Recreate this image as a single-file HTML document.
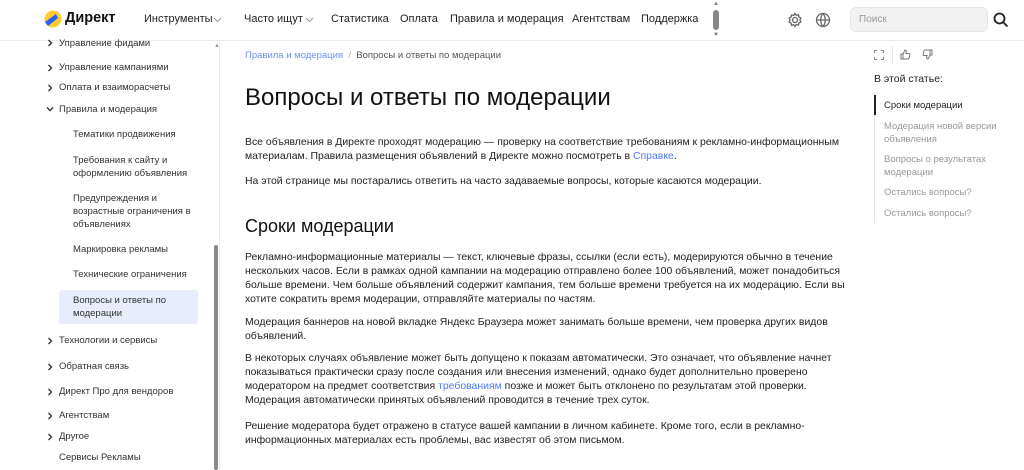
<!DOCTYPE html>
<html><head><meta charset="utf-8"><style>
*{margin:0;padding:0;box-sizing:border-box}
body{width:1024px;height:470px;overflow:hidden;background:#fff;font-family:"Liberation Sans",sans-serif;color:#222;position:relative}
.a{position:absolute;white-space:nowrap}
.hdr{position:absolute;left:0;top:0;width:1024px;height:41px;border-bottom:1px solid #ebebeb;background:#fff}
.nav{font-size:11px;color:#222;top:13px}
.sb{font-size:9.5px;color:#333;line-height:13px}
.t{font-size:10.45px;line-height:14px;color:#222;left:245px}
.lnk{color:#4a7cf6}
.toc{font-size:9.5px;color:#999;line-height:13px;left:884px}
</style></head><body>
<div class="hdr"></div>
<svg class="a" style="left:44px;top:10px" width="18" height="18" viewBox="0 0 18 18"><circle cx="9" cy="9" r="8.5" fill="#fc3"/><path d="M1 12 L12 4 L14 8 L4 16Z" fill="#2a5ff0"/></svg>
<div class="a" style="left:65px;top:10px;font-size:14.5px;font-weight:bold;color:#111">Директ</div>
<div class="a nav" style="left:144px">Инструменты</div>
<svg class="a" style="left:213px;top:17px" width="9" height="6" viewBox="0 0 9 6" fill="none" stroke="#999" stroke-width="1"><path d="M1 1l3.5 3.5L8 1"/></svg>
<div class="a nav" style="left:244px">Часто ищут</div>
<svg class="a" style="left:305px;top:17px" width="9" height="6" viewBox="0 0 9 6" fill="none" stroke="#999" stroke-width="1"><path d="M1 1l3.5 3.5L8 1"/></svg>
<div class="a nav" style="left:331px">Статистика</div>
<div class="a nav" style="left:400px">Оплата</div>
<div class="a nav" style="left:450px">Правила и модерация</div>
<div class="a nav" style="left:572px">Агентствам</div>
<div class="a nav" style="left:641px">Поддержка</div>
<div class="a" style="left:713px;top:10px;width:6px;height:20px;background:#888;border-radius:3px"></div>
<div class="a" style="left:713px;top:1px;font-size:6px;color:#777">▲</div>
<div class="a" style="left:713px;top:32px;font-size:6px;color:#777">▼</div>
<svg class="a" style="left:787px;top:12px" width="16" height="16" viewBox="0 0 16 16" fill="none" stroke="#666" stroke-width="1.3"><circle cx="8" cy="8" r="2.5"/><path d="M8 1.5l1.3 1.8 2.2-.6.4 2.2 2 1-1 2 1 2-2 1-.4 2.2-2.2-.6L8 14.5l-1.3-1.8-2.2.6-.4-2.2-2-1 1-2-1-2 2-1 .4-2.2 2.2.6z"/></svg>
<svg class="a" style="left:815px;top:12px" width="16" height="16" viewBox="0 0 16 16" fill="none" stroke="#666" stroke-width="1.3"><circle cx="8" cy="8" r="6.5"/><path d="M1.5 8h13M8 1.5c-3 3.5-3 9.5 0 13M8 1.5c3 3.5 3 9.5 0 13"/></svg>
<div class="a" style="left:850px;top:7px;width:138px;height:25px;background:#f2f2f2;border:1px solid #e6e6e6;border-radius:6px;font-size:10px;color:#999;padding:6px 8px">Поиск</div>
<svg class="a" style="left:993px;top:12px" width="16" height="16" viewBox="0 0 16 16" fill="none" stroke="#222" stroke-width="1.8"><circle cx="6.5" cy="6.5" r="5"/><path d="M10.2 10.2L14.5 14.5"/></svg>

<div class="a" style="left:219px;top:42px;width:1px;height:428px;background:#ebebeb"></div>
<div class="a" style="left:214px;top:245px;width:4px;height:225px;background:#8a8a8a;border-radius:2px"></div>
<div class="a" style="left:214px;top:43px;font-size:6px;color:#999">▲</div>

<svg width="0" height="0" style="position:absolute"><defs><path id="cr" d="M1.5 1l3 3-3 3" fill="none" stroke="#333" stroke-width="1.4"/><path id="cd" d="M1 2.5l3 3 3-3" fill="none" stroke="#333" stroke-width="1.4"/></defs></svg>
<svg class="a" style="left:47px;top:39px" width="8" height="8"><use href="#cr"/></svg><div class="a sb" style="left:59px;top:37px">Управление фидами</div>
<svg class="a" style="left:47px;top:64px" width="8" height="8"><use href="#cr"/></svg><div class="a sb" style="left:59px;top:61px">Управление кампаниями</div>
<svg class="a" style="left:47px;top:84px" width="8" height="8"><use href="#cr"/></svg><div class="a sb" style="left:59px;top:81px">Оплата и взаиморасчеты</div>
<svg class="a" style="left:46px;top:105px" width="8" height="8"><use href="#cd"/></svg><div class="a sb" style="left:59px;top:103px">Правила и модерация</div>
<div class="a sb" style="left:73px;top:128px">Тематики продвижения</div>
<div class="a sb" style="left:73px;top:154px">Требования к сайту и<br>оформлению объявления</div>
<div class="a sb" style="left:73px;top:192px">Предупреждения и<br>возрастные ограничения в<br>объявлениях</div>
<div class="a sb" style="left:73px;top:243px">Маркировка рекламы</div>
<div class="a sb" style="left:73px;top:268px">Технические ограничения</div>
<div class="a" style="left:59px;top:290px;width:139px;height:34px;background:#e8edfd;border-radius:3px"></div>
<div class="a sb" style="left:73px;top:294px">Вопросы и ответы по<br>модерации</div>
<svg class="a" style="left:47px;top:337px" width="8" height="8"><use href="#cr"/></svg><div class="a sb" style="left:59px;top:334px">Технологии и сервисы</div>
<svg class="a" style="left:47px;top:363px" width="8" height="8"><use href="#cr"/></svg><div class="a sb" style="left:59px;top:360px">Обратная связь</div>
<svg class="a" style="left:47px;top:388px" width="8" height="8"><use href="#cr"/></svg><div class="a sb" style="left:59px;top:385px">Директ Про для вендоров</div>
<svg class="a" style="left:47px;top:412px" width="8" height="8"><use href="#cr"/></svg><div class="a sb" style="left:59px;top:409px">Агентствам</div>
<svg class="a" style="left:47px;top:433px" width="8" height="8"><use href="#cr"/></svg><div class="a sb" style="left:59px;top:430px">Другое</div>
<div class="a sb" style="left:59px;top:451px">Сервисы Рекламы</div>

<div class="a" style="left:245px;top:50px;font-size:9.5px;color:#555"><span style="color:#6f8ff0">Правила и модерация</span> <span style="color:#aaa">&nbsp;/&nbsp;</span> Вопросы и ответы по модерации</div>
<div class="a" style="left:245px;top:84px;font-size:24px;color:#111">Вопросы и ответы по модерации</div>

<div class="a t" style="top:136px">Все объявления в Директе проходят модерацию — проверку на соответствие требованиям к рекламно-информационным<br>материалам. Правила размещения объявлений в Директе можно посмотреть в <span class="lnk">Справке</span>.</div>
<div class="a t" style="top:175px">На этой странице мы постарались ответить на часто задаваемые вопросы, которые касаются модерации.</div>
<div class="a" style="left:245px;top:216px;font-size:18px;color:#111">Сроки модерации</div>
<div class="a t" style="top:251px">Рекламно-информационные материалы — текст, ключевые фразы, ссылки (если есть), модерируются обычно в течение<br>нескольких часов. Если в рамках одной кампании на модерацию отправлено более 100 объявлений, может понадобиться<br>больше времени. Чем больше объявлений содержит кампания, тем больше времени требуется на их модерацию. Если вы<br>хотите сократить время модерации, отправляйте материалы по частям.</div>
<div class="a t" style="top:316px">Модерация баннеров на новой вкладке Яндекс Браузера может занимать больше времени, чем проверка других видов<br>объявлений.</div>
<div class="a t" style="top:352px">В некоторых случаях объявление может быть допущено к показам автоматически. Это означает, что объявление начнет<br>показываться практически сразу после создания или внесения изменений, однако будет дополнительно проверено<br>модератором на предмет соответствия <span class="lnk">требованиям</span> позже и может быть отклонено по результатам этой проверки.<br>Модерация автоматически принятых объявлений проводится в течение трех суток.</div>
<div class="a t" style="top:420px">Решение модератора будет отражено в статусе вашей кампании в личном кабинете. Кроме того, если в рекламно-<br>информационных материалах есть проблемы, вас известят об этом письмом.</div>

<svg class="a" style="left:874px;top:50px" width="10" height="10" viewBox="0 0 10 10" fill="none" stroke="#888" stroke-width="1.1"><path d="M0.5 3V0.5H3M7 0.5H9.5V3M9.5 7V9.5H7M3 9.5H0.5V7"/></svg>
<div class="a" style="left:892px;top:46px;width:1px;height:18px;background:#e5e5e5"></div>
<svg class="a" style="left:900px;top:49px" width="11" height="11" viewBox="0 0 11 11" fill="none" stroke="#777" stroke-width="1"><path d="M1 5h2v5H1zM3 5l2-4c1 0 1.5.5 1.3 1.8L6 4.5h3c.7 0 1 .6.8 1.2L9 9.3c-.2.5-.5.7-1 .7H3"/></svg>
<svg class="a" style="left:922px;top:49px" width="11" height="11" viewBox="0 0 11 11" fill="none" stroke="#777" stroke-width="1"><path d="M10 6H8V1h2zM8 6L6 10c-1 0-1.5-.5-1.3-1.8L5 6.5H2c-.7 0-1-.6-.8-1.2L2 1.7c.2-.5.5-.7 1-.7h5"/></svg>
<div class="a" style="left:874px;top:73px;font-size:10.5px;color:#222">В этой статье:</div>
<div class="a" style="left:874px;top:93px;width:1px;height:130px;background:#e5e5e5"></div>
<div class="a" style="left:874px;top:95px;width:2px;height:20px;background:#222"></div>
<div class="a toc" style="top:99px;color:#222">Сроки модерации</div>
<div class="a toc" style="top:120px">Модерация новой версии<br>объявления</div>
<div class="a toc" style="top:153px">Вопросы о результатах<br>модерации</div>
<div class="a toc" style="top:186px">Остались вопросы?</div>
<div class="a toc" style="top:207px">Остались вопросы?</div>
</body></html>
